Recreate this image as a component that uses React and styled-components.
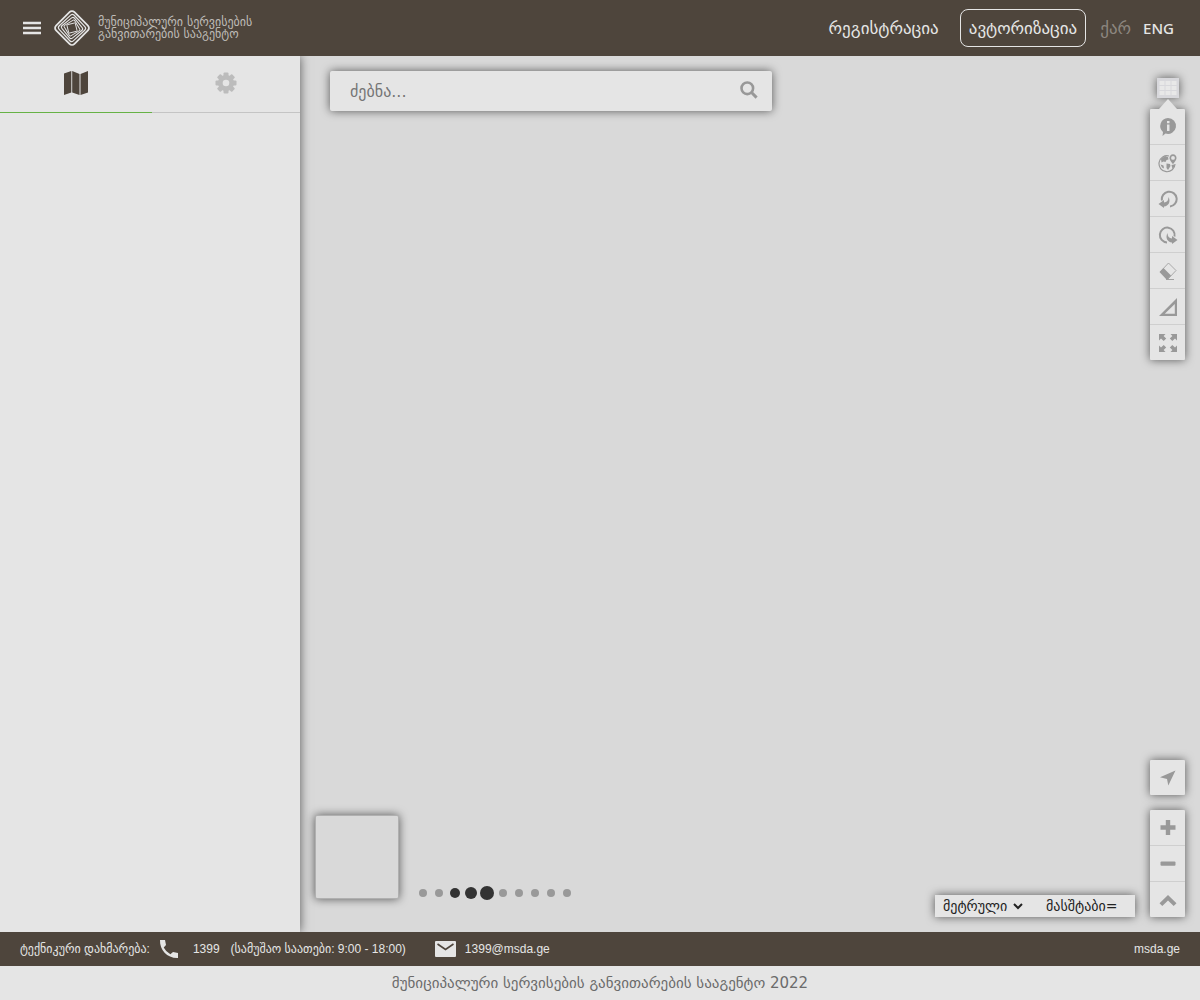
import React from "react";
import styled, { createGlobalStyle } from "styled-components";

const caps = `"DejaVu Sans", "Noto Sans", sans-serif`;
const body = `"Liberation Sans", "DejaVu Sans", sans-serif`;
const shadow = "0 0 10px rgba(0, 0, 0, 0.6)";

const Global = createGlobalStyle`
  * { box-sizing: border-box; }
  body { margin: 0; background: #e5e5e5; font-family: ${body}; }
  button, input, select { font: inherit; color: inherit; margin: 0; }
  button { display: grid; place-items: center; padding: 0; border: 0; background: none; cursor: pointer; }
  a { color: inherit; text-decoration: none; }
  svg { display: block; }
`;

const Page = styled.div`
  display: flex;
  flex-direction: column;
  min-height: 100vh;
`;

const Header = styled.header`
  display: flex;
  align-items: center;
  height: 56px;
  padding: 0 26px 0 22px;
  background: #4e453c;
  color: #e5e5e5;
  font-family: ${caps};
`;

const Brand = styled.a`
  display: flex;
  align-items: center;
  gap: 7px;
  margin-left: 11px;
  margin-right: auto;
`;

const BrandText = styled.span`
  display: block;
  font-size: 12px;
  line-height: 12px;
  color: #bfbcb8;
  white-space: nowrap;
`;

const Nav = styled.nav`
  display: flex;
  align-items: center;
  font-size: 17px;
  white-space: nowrap;
`;

const NavLink = styled.a`
  margin-right: 21px;
`;

const LoginButton = styled.button`
  height: 38px;
  padding: 0 8px;
  margin-right: 14px;
  border: 1px solid #e5e5e5;
  border-radius: 8px;
`;

const Lang = styled.a`
  color: ${(p) => (p.$muted ? "#8d8780" : "#e5e5e5")};
  margin-left: ${(p) => (p.$muted ? 0 : "12px")};
  ${(p) => !p.$muted && `
    font-family: "Noto Sans", sans-serif;
    font-size: 15px;
    font-weight: 500;
  `}
`;

const Main = styled.main`
  display: flex;
  flex: 1;
`;

const Sidebar = styled.aside`
  flex: 0 0 300px;
  background: #e5e5e5;
  box-shadow: ${shadow};
  clip-path: inset(0 -20px 0 0);
  z-index: 1;
`;

const Tabs = styled.div`
  display: flex;
`;

const Tab = styled.button`
  flex: 0 0 ${(p) => (p.$active ? "152px" : "148px")};
  height: 57px;
  padding-bottom: 2px;
  border-bottom: 1px solid ${(p) => (p.$active ? "#66b245" : "#c4c4c4")};
  color: ${(p) => (p.$active ? "#4e453c" : "#bcbcbc")};
`;

const MapArea = styled.section`
  position: relative;
  flex: 1;
  background: #d9d9d9;
  overflow: hidden;
`;

const Search = styled.form`
  position: absolute;
  top: 15px;
  left: 30px;
  display: flex;
  width: 442px;
  height: 40px;
  border-radius: 2px;
  background: #e5e5e5;
  box-shadow: ${shadow};
`;

const SearchInput = styled.input`
  flex: 1;
  min-width: 0;
  padding: 0 20px;
  border: 0;
  outline: 0;
  background: none;
  font-family: ${caps};
  font-size: 16px;
  &::placeholder { color: #757575; opacity: 1; }
`;

const SearchButton = styled.button`
  width: 46px;
  padding-bottom: 2px;
  color: #989898;
`;

const Tools = styled.div`
  position: absolute;
  top: 22px;
  right: 15px;
  display: flex;
  flex-direction: column;
  align-items: center;
`;

const GridToggle = styled.button`
  width: 22px;
  height: 20px;
  background: #d8d8dc;
  box-shadow: ${shadow};
`;

const Pointer = styled.span`
  border: 9px solid transparent;
  border-top-width: 0;
  border-bottom: 10px solid #e5e5e5;
  margin-top: 1px;
  z-index: 1;
`;

const ButtonStack = styled.div`
  width: 35px;
  border-radius: 1px;
  background: #e5e5e5;
  box-shadow: ${shadow};
`;

const StackButton = styled.button`
  width: 35px;
  height: 36px;
  color: #999999;
  border-bottom: 1px solid #cfcfcf;
  &:last-child { height: 35px; border-bottom: 0; }
`;

const Zoom = styled.div`
  position: absolute;
  right: 15px;
  bottom: 15px;
  display: flex;
  flex-direction: column;
  gap: 15px;
`;

const Overview = styled.button`
  position: absolute;
  left: 15px;
  bottom: 33px;
  width: 84px;
  height: 84px;
  border: 1px solid #b0b0b0;
  border-radius: 2px;
  background: #d9d9d9;
  box-shadow: ${shadow};
`;

const Dots = styled.div`
  position: absolute;
  left: 115px;
  bottom: 31px;
  display: flex;
`;

const DotButton = styled.button`
  width: 16px;
  height: 16px;
`;

const Dot = styled.span`
  width: ${(p) => p.$size}px;
  height: ${(p) => p.$size}px;
  border-radius: 50%;
  background: ${(p) => (p.$size > 8 ? "#333333" : "#999999")};
`;

const ScaleBar = styled.div`
  position: absolute;
  right: 65px;
  bottom: 15px;
  display: flex;
  align-items: center;
  width: 200px;
  height: 22px;
  padding-left: 4px;
  background: #e5e5e5;
  box-shadow: ${shadow};
  color: #222222;
  font-family: ${caps};
  font-size: 14px;
`;

const UnitSelect = styled.select`
  width: 87px;
  height: 22px;
  margin-right: 20px;
  border: 0;
  background: none;
`;

const Support = styled.footer`
  display: flex;
  align-items: center;
  height: 34px;
  padding: 0 20px;
  background: #4e453c;
  color: #e5e5e5;
  font-size: 12px;
  white-space: nowrap;
`;

const SupportText = styled.span`
  margin-left: ${(p) => p.$gap || 0}px;
`;

const SupportLink = styled.a`
  margin-left: ${(p) => (p.$end ? "auto" : "9px")};
`;

const Icon = styled.svg`
  flex: none;
  margin-left: ${(p) => p.$gap || 0}px;
`;

const Copyright = styled.footer`
  height: 34px;
  line-height: 34px;
  text-align: center;
  color: #6b6b6b;
  font-family: ${caps};
  font-size: 15px;
`;

const tools = [
  ["ინფორმაცია", <path key="a" fillRule="evenodd" fill="currentColor" d="M10 1a8 8 0 1 1-2.500 15.600L4.500 19l.5-4A8 8 0 0 1 10 1ZM9 4v2.300h2.500V4ZM9 7.500v6.500h2.500V7.500Z" />],
  ["კოორდინატები", <g key="a" fill="currentColor"><path d="M11 3A8 8 0 1 0 17 11" fill="none" stroke="currentColor" strokeWidth="1.200" /><path d="M3 6l4-3 3 1 .5 2.500-2 .5-1 2-2-.5-2 1ZM8.500 10.500l3.500.5.500 2-2.500 4-1.500-2ZM13.500 12l2.500-.5.500 2-2 2.500ZM2.500 11.500l3 1 .5 3-2-1Z" /><path fillRule="evenodd" d="M15 1.200a3.600 3.600 0 0 1 3.500 4c0 2-3.500 5.800-3.500 5.800s-3.500-3.800-3.500-5.800a3.600 3.600 0 0 1 3.500-4Zm0 1.800a1.900 1.900 0 1 0 0 3.800 1.900 1.900 0 0 0 0-3.800Z" /></g>],
  ["უკან", <g key="a"><path d="M4 11.500A7.400 7.400 0 1 1 12 17.400" fill="none" stroke="currentColor" strokeWidth="2" /><path fill="currentColor" d="m.5 15 5.500-4v2.500c3-.2 4.500-2.200 4.500-5.500 2.500 5 0 9-4.500 9.500V19Z" /></g>],
  ["წინ", <g key="a"><path d="M9 17.400A7.400 7.400 0 1 1 16.500 11.500" fill="none" stroke="currentColor" strokeWidth="2" /><path fill="currentColor" d="m19.500 15-5.500-4v2.500c-3-.2-4.500-2.200-4.500-5.500-2.500 5 0 9 4.500 9.500V19Z" /></g>],
  ["წაშლა", <g key="a"><path d="m2.500 10.500 8-8.500 7.500 7.500-8 8.500Z" fill="none" stroke="currentColor" strokeWidth="0.800" /><path fill="currentColor" d="m1.500 11 4-4 7.500 7.500-3.500 3.700H8.300Z" /><path stroke="currentColor" strokeWidth="0.900" d="M8 18.500h8" /></g>],
  ["გაზომვა", <path key="a" fillRule="evenodd" fill="currentColor" d="M19 1v18H1ZM16.800 7 6.800 16.800H16.800Z" />],
  ["სრული ეკრანი", <path key="a" fill="currentColor" d="M1 1h6.500L5.600 2.900 8.200 5.500 5.700 8 3 5.400 1 7.400ZM19 1v6.400l-2-2L14.300 8l-2.500-2.500 2.600-2.600L12.500 1ZM1 19v-6.400l2 2L5.700 12l2.500 2.500-2.600 2.600L7.500 19ZM19 19h-6.500l1.900-1.900-2.600-2.600 2.500-2.500 2.700 2.600 2-2Z" />],
];

const zoomButtons = [
  ["გადიდება", "M7.800 2h4.400v5.300h5.300v4.400h-5.300v5.300H7.800v-5.300H2.500V7.300h5.300Z"],
  ["დაპატარავება", "M3.500 7.500h13a1 1 0 0 1 1 1v2.200a1 1 0 0 1-1 1h-13a1 1 0 0 1-1-1V8.500a1 1 0 0 1 1-1Z"],
  ["ზემოთ", "m10 5 8.500 8.300-2.800 2.700L10 10.500 4.300 16l-2.800-2.700Z"],
];

const dots = [8, 8, 10, 12, 14, 8, 8, 8, 8, 8];

function Logo() {
  return (
    <svg width="38" height="38" viewBox="0 0 38 38" fill="none" stroke="#e5e5e5" aria-hidden="true">
      <rect x="6" y="6" width="26" height="26" rx="3.500" strokeWidth="1.800" transform="rotate(45 19 19)" />
      <rect x="8.700" y="8.700" width="20.600" height="20.600" rx="2.500" strokeWidth="1.200" transform="rotate(47 19 19)" />
      <rect x="10.900" y="10.900" width="16.200" height="16.200" rx="2" strokeWidth="1.100" transform="rotate(51 19 19)" />
      <rect x="12.900" y="12.900" width="12.200" height="12.200" rx="1" strokeWidth="1" transform="rotate(59 19 19)" />
      <rect x="14.700" y="14.700" width="8.600" height="8.600" rx="0.500" strokeWidth="0.900" transform="rotate(76 19 19)" />
    </svg>
  );
}

export default function App() {
  return (
    <Page>
      <Global />
      <Header>
        <button type="button" aria-label="მენიუ">
          <svg width="20" height="20" viewBox="0 0 20 20" stroke="#e5e5e5" strokeWidth="2.400"><path d="M1 5h18M1 10h18M1 15h18" /></svg>
        </button>
        <Brand href="#">
          <Logo />
          <BrandText>მუნიციპალური სერვისების<br />განვითარების სააგენტო</BrandText>
        </Brand>
        <Nav>
          <NavLink href="#">რეგისტრაცია</NavLink>
          <LoginButton type="button">ავტორიზაცია</LoginButton>
          <Lang href="#" $muted>ქარ</Lang>
          <Lang href="#">ENG</Lang>
        </Nav>
      </Header>
      <Main>
        <Sidebar>
          <Tabs>
            <Tab type="button" aria-label="რუკა" $active>
              <svg width="26" height="26" viewBox="0 0 26 26" fill="currentColor"><path d="M1 3.500 8.300 1v21.500L1 25ZM9.200 1l7.300 3v21L9.200 22.500ZM17.500 4 25 1v21.500L17.500 25Z" /></svg>
            </Tab>
            <Tab type="button" aria-label="პარამეტრები">
              <svg width="22" height="22" viewBox="0 0 22 22">
                <g fill="currentColor">
                  {[0, 45, 90, 135].map((a) => <rect key={a} x="8.5" y="0.5" width="5" height="21" rx="1" transform={`rotate(${a} 11 11)`} />)}
                  <circle cx="11" cy="11" r="8" />
                </g>
                <circle cx="11" cy="11" r="3.3" fill="#e5e5e5" />
              </svg>
            </Tab>
          </Tabs>
        </Sidebar>
        <MapArea>
          <Search>
            <SearchInput type="text" aria-label="ძებნა" placeholder="ძებნა..." />
            <SearchButton type="button" aria-label="ძებნა">
              <svg width="18" height="18" viewBox="0 0 18 18" fill="none" stroke="currentColor"><circle cx="7.3" cy="7.3" r="5.8" strokeWidth="2.6" /><path d="m11.8 11.8 4.8 4.8" strokeWidth="3" /></svg>
            </SearchButton>
          </Search>
          <Tools>
            <GridToggle type="button" aria-label="ხელსაწყოები">
              <svg width="18" height="16" viewBox="0 0 18 16" fill="#e8e8e8">
                {[0, 1, 2].map((r) => [0, 1, 2].map((c) => <rect key={`${r}${c}`} x={c * 6 + 0.5} y={r * 5 + 1} width="5" height="4" />))}
              </svg>
            </GridToggle>
            <Pointer />
            <ButtonStack>
              {tools.map(([label, art]) => (
                <StackButton key={label} type="button" aria-label={label}>
                  <svg width="20" height="20" viewBox="0 0 20 20">{art}</svg>
                </StackButton>
              ))}
            </ButtonStack>
          </Tools>
          <Overview type="button" aria-label="მიმოხილვა" />
          <Dots>
            {dots.map((size, i) => (
              <DotButton key={i} type="button" aria-label={`${i + 1}`}><Dot $size={size} /></DotButton>
            ))}
          </Dots>
          <ScaleBar>
            <UnitSelect aria-label="ერთეული" defaultValue="m"><option value="m">მეტრული</option></UnitSelect>
            <span>მასშტაბი=</span>
          </ScaleBar>
          <Zoom>
            <ButtonStack>
              <StackButton type="button" aria-label="მდებარეობა">
                <svg width="20" height="20" viewBox="0 0 20 20" fill="currentColor"><path d="M17.500 2.500 10.300 17.500 9 11 2 9.200Z" /></svg>
              </StackButton>
            </ButtonStack>
            <ButtonStack>
              {zoomButtons.map(([label, d]) => (
                <StackButton key={label} type="button" aria-label={label}>
                  <svg width="20" height="20" viewBox="0 0 20 20" fill="currentColor"><path d={d} /></svg>
                </StackButton>
              ))}
            </ButtonStack>
          </Zoom>
        </MapArea>
      </Main>
      <Support>
        <SupportText>ტექნიკური დახმარება:</SupportText>
        <Icon $gap={8} width="22" height="22" viewBox="0 0 22 22" fill="#e5e5e5"><path d="M2 2h5l1 5-2.300 2.600a15 15 0 0 0 6.700 6.700l2.600-2.300 5 1V20C9.500 20.500 1.500 12 2 2Z" /></Icon>
        <SupportText $gap={13}>1399</SupportText>
        <SupportText $gap={11}>(სამუშაო საათები: 9:00 - 18:00)</SupportText>
        <Icon $gap={29} width="21" height="16" viewBox="0 0 21 16"><rect width="21" height="16" rx="1" fill="#e5e5e5" /><path d="m2.500 3 8 5.500 8-5.500" fill="none" stroke="#4e453c" strokeWidth="1.600" /></Icon>
        <SupportLink href="mailto:1399@msda.ge">1399@msda.ge</SupportLink>
        <SupportLink href="#" $end>msda.ge</SupportLink>
      </Support>
      <Copyright>მუნიციპალური სერვისების განვითარების სააგენტო 2022</Copyright>
    </Page>
  );
}
